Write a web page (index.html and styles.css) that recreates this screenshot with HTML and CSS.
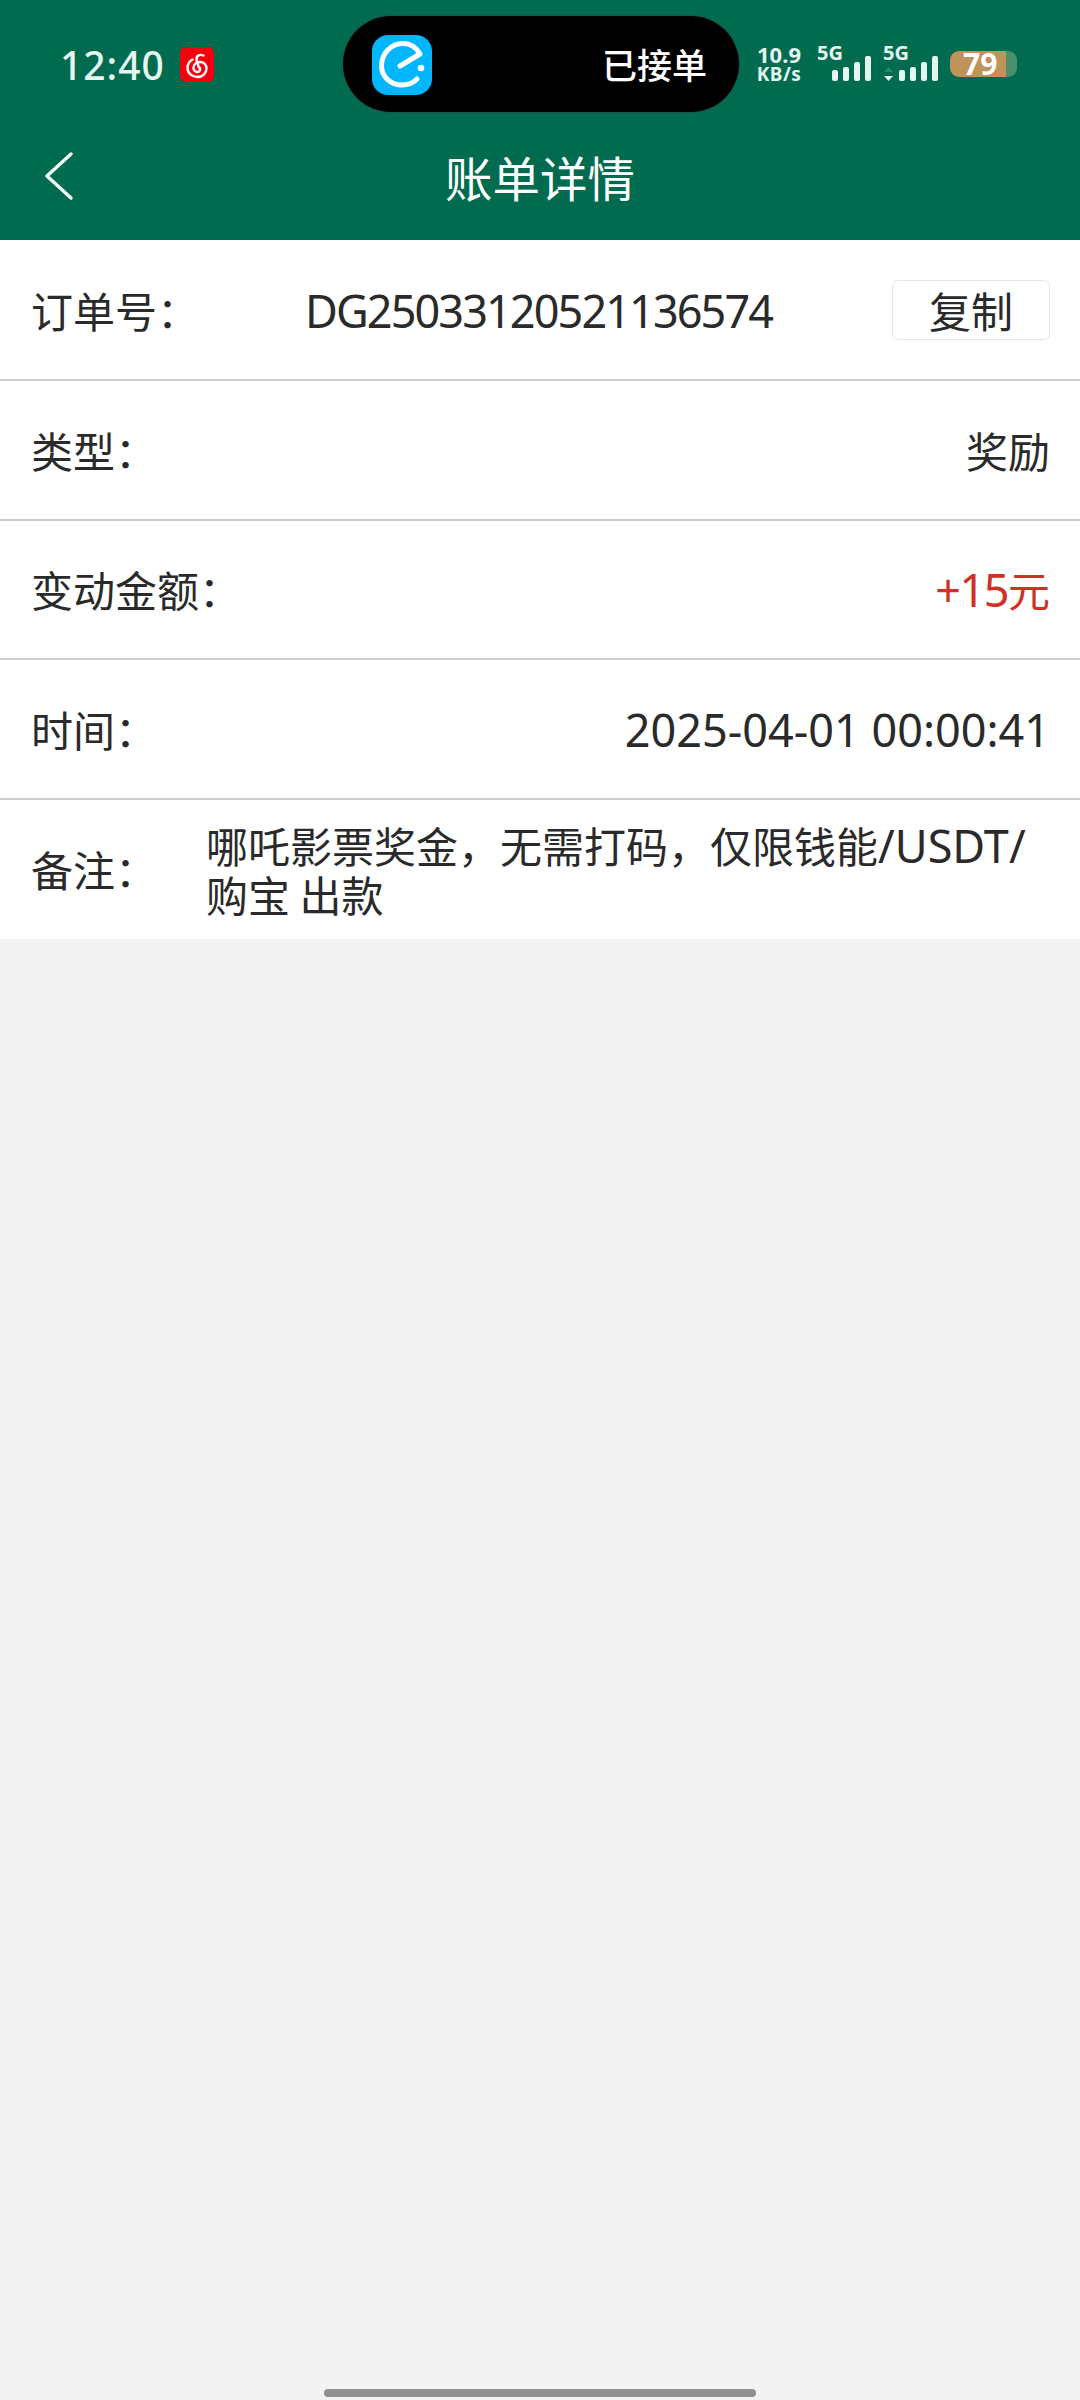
FILE: index.html
```html
<!DOCTYPE html>
<html lang="zh-CN">
<head>
<meta charset="utf-8">
<title>账单详情</title>
<link rel="stylesheet" href="styles.css">
</head>
<body>
<div class="page">
  <header class="top">
    <div class="status">
      <span class="clock">12:40</span>
      <svg class="music" viewBox="0 0 34 35" aria-hidden="true">
        <rect width="34" height="35" rx="6" fill="#f5000f"/>
        <path d="M23.500 8.500C20 7 16.500 8.500 16.500 12c0 2 1.500 6 2.500 8.500" class="music-line"/>
        <path d="M12.500 12.500C9 14.500 7.500 17.500 7.500 21c0 5 4.500 9 10 9 5 0 9-3.500 9-8.500 0-4-3-6.500-6-6.500-4 0-7 2.500-7 6 0 2.500 2 4 4 4s3-1.500 2.500-4" class="music-line"/>
      </svg>
      <div class="island">
        <svg class="app" viewBox="0 0 60 60" aria-hidden="true">
          <rect width="60" height="60" rx="16" fill="#00b6ff"/>
          <path d="M28 31 48 19C44 12 38 8.500 31 8.500 19 8.500 9.500 18.500 9.500 31c0 11 9.500 19 20.500 19 6 0 11-2 15-6" class="app-e"/>
          <circle cx="49" cy="33" r="3.300" fill="#fff"/>
        </svg>
        <span class="island-text">已接单</span>
      </div>
      <div class="speed"><span>10.9</span><span class="speed-unit">KB/s</span></div>
      <div class="signal">
        <span class="gen">5G</span>
        <div class="bars">
          <i class="b1"></i><i class="b2"></i><i class="b3"></i><i class="b4"></i>
        </div>
      </div>
      <div class="signal second">
        <span class="gen">5G</span>
        <div class="bars">
          <svg class="updown" viewBox="0 0 9 14" aria-hidden="true">
            <path d="M4.500 0 9 5H0z" fill="#1d8c6c"/>
            <path d="M4.500 14 9 9H0z" fill="#e4f6f0"/>
          </svg>
          <i class="b1"></i><i class="b2"></i><i class="b3"></i><i class="b4"></i>
        </div>
      </div>
      <div class="battery">79</div>
    </div>
    <div class="navbar">
      <svg class="back" viewBox="0 0 30 50" aria-hidden="true">
        <path d="M27 3 3 25l24 22"/>
      </svg>
      <h1 class="title">账单详情</h1>
    </div>
  </header>

  <main class="sheet">
    <div class="row">
      <span class="label">订单号&#xFF1A;</span>
      <span class="order-no latin">DG25033120521136574</span>
      <button class="copy">复制</button>
    </div>
    <div class="row">
      <span class="label">类型&#xFF1A;</span>
      <span class="value">奖励</span>
    </div>
    <div class="row">
      <span class="label">变动金额&#xFF1A;</span>
      <span class="value amount"><span class="latin tight">+15</span>元</span>
    </div>
    <div class="row">
      <span class="label">时间&#xFF1A;</span>
      <span class="value time latin">2025-04-01 00:00:41</span>
    </div>
    <div class="row note">
      <span class="label">备注&#xFF1A;</span>
      <p class="note-text">哪吒影票奖金&#xFF0C;无需打码&#xFF0C;仅限钱能<span class="latin">/USDT/</span><br>购宝 出款</p>
    </div>
  </main>

  <div class="rest">
    <div class="home-bar"></div>
  </div>
</div>
</body>
</html>
```

FILE: styles.css
```css
* {
  box-sizing: border-box;
}

html,
body {
  margin: 0;
  padding: 0;
}

body {
  font-family: "Noto Sans CJK SC", "Noto Sans", sans-serif;
  color: #222;
}

.page {
  width: 1080px;
  height: 2400px;
  display: flex;
  flex-direction: column;
  background: #f3f3f3;
}

/* Green header with the system status bar */
.top {
  height: 240px;
  background: #016b4f;
  color: #fff;
  flex: none;
}

.status {
  height: 128px;
  display: flex;
  align-items: flex-start;
  padding-left: 60px;
}

.clock {
  font-family: "Noto Sans", sans-serif;
  font-size: 39px;
  font-weight: 500;
  line-height: 46px;
  margin-top: 42px;
  color: #e6f6f1;
  letter-spacing: 1px;
  width: 120px;
}

.music {
  width: 34px;
  height: 35px;
  margin-top: 47px;
}

.music-line {
  fill: none;
  stroke: #fff;
  stroke-width: 2.400;
  stroke-linecap: round;
}

.island {
  width: 396px;
  height: 96px;
  margin: 16px 0 0 129px;
  background: #000;
  border-radius: 48px;
  box-shadow: 0 0 0 1px #17574a;
  display: flex;
  align-items: center;
  justify-content: space-between;
  padding: 0 32px 0 29px;
}

.app {
  width: 60px;
  height: 60px;
  margin-top: 2px;
}

.app-e {
  fill: none;
  stroke: #fff;
  stroke-width: 5;
  stroke-linecap: round;
  stroke-linejoin: round;
}

.island-text {
  font-size: 35px;
  font-weight: 500;
  line-height: 44px;
  color: #fff;
}

.speed {
  width: 44px;
  margin: 43px 0 0 18px;
  display: flex;
  flex-direction: column;
  align-items: center;
  font-family: "Noto Sans", sans-serif;
  font-weight: 700;
  font-size: 22px;
  line-height: 22px;
  color: #e4f6f0;
}

.speed-unit {
  font-size: 19px;
  line-height: 18px;
  letter-spacing: .5px;
}

.signal {
  width: 54px;
  margin: 43px 0 0 16px;
  color: #e4f6f0;
  font-family: "Noto Sans", sans-serif;
  font-weight: 700;
  font-size: 20px;
  line-height: 20px;
}

.signal.second {
  width: 55px;
  margin-left: 12px;
}

.gen {
  display: block;
  height: 13px;
}

.bars {
  height: 25px;
  display: flex;
  align-items: flex-end;
  justify-content: flex-end;
  gap: 5px;
}

.bars i {
  display: block;
  width: 6px;
  background: #e4f6f0;
  border-radius: 2px;
}

.bars .b1 { height: 11px; }
.bars .b2 { height: 14px; }
.bars .b3 { height: 19px; }
.bars .b4 { height: 25px; }

.updown {
  width: 9px;
  height: 14px;
  margin-right: 1px;
}

.battery {
  width: 67px;
  height: 26px;
  margin: 51px 0 0 12px;
  background: linear-gradient(to right, #bf935a 56px, #4d8f6c 56px);
  border-radius: 9px;
  font-family: "Noto Sans", sans-serif;
  font-weight: 700;
  font-size: 30px;
  line-height: 26px;
  color: #fff;
  padding-left: 13px;
}

/* Title bar */
.navbar {
  height: 112px;
  position: relative;
  display: flex;
  align-items: center;
  justify-content: center;
}

.title {
  margin: 0;
  font-size: 47.500px;
  font-weight: 400;
  line-height: 60px;
  color: #fff;
  padding-bottom: 14px;
}

.back {
  position: absolute;
  left: 44px;
  top: 23px;
  width: 30px;
  height: 50px;
  fill: none;
  stroke: #f2f9f7;
  stroke-width: 3.500;
  stroke-linecap: round;
  stroke-linejoin: round;
}

/* Detail rows */
.sheet {
  background: #fff;
  flex: none;
}

.row {
  height: 139.500px;
  padding: 0 30px 0 32px;
  border-bottom: 2px solid #cdcdcd;
  display: flex;
  align-items: center;
  justify-content: space-between;
  font-size: 42px;
  font-weight: 400;
  line-height: 48px;
  color: #2a2a2a;
}

.row:first-child {
  height: 141px;
}

.row:last-child {
  border-bottom: 0;
}

.label {
  margin-left: -1px;
}

.latin {
  font-family: "Noto Sans", sans-serif;
  font-size: 45px;
  font-weight: 400;
}

.tight {
  letter-spacing: -1.500px;
}

.order-no {
  margin-left: 106px;
  flex: 1;
  line-height: 48px;
  letter-spacing: -1.900px;
  padding-top: 2px;
}

.value {
  text-align: right;
}

.time {
  padding-top: 2px;
}

.amount {
  color: #cf3125;
}

.copy {
  width: 158px;
  height: 60px;
  padding: 0;
  border: 1px solid #e6e6e6;
  border-radius: 6px;
  background: #fff;
  color: #2a2a2a;
  font-family: inherit;
  font-size: 42px;
  font-weight: 400;
  line-height: 56px;
}

.note {
  justify-content: flex-start;
}

.note .label {
  width: 175px;
  flex: none;
}

.note-text {
  margin: 0;
  font-size: 42px;
  line-height: 48px;
}

/* Empty page area with the gesture bar */
.rest {
  flex: 1;
  display: flex;
  align-items: flex-end;
  justify-content: center;
  padding-bottom: 3px;
}

.home-bar {
  width: 432px;
  height: 8px;
  border-radius: 4px;
  background: #909090;
}
```
